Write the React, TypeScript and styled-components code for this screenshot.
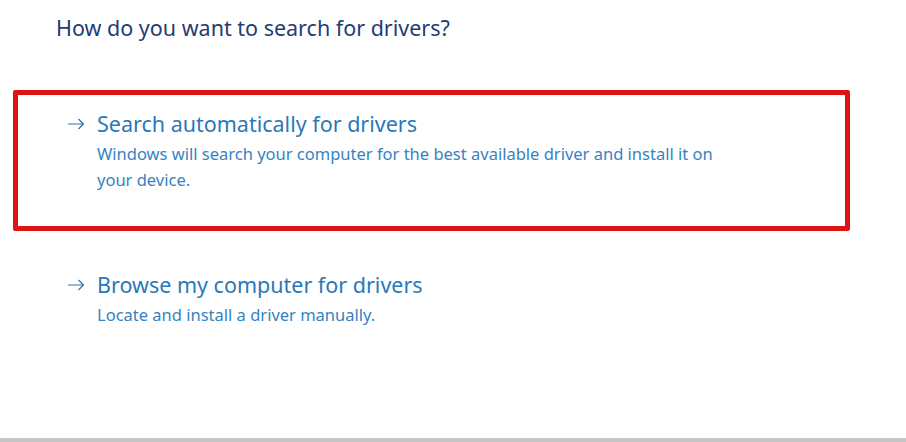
import styled, { createGlobalStyle } from "styled-components";

const GlobalStyle = createGlobalStyle`
    html, body {
        margin: 0;
        padding: 0;
        background: #ffffff;
    }
    body {
        font-family: "Noto Sans", "Open Sans", sans-serif;
    }
`;

type Choice = {
    title: string;
    desc: string;
    highlighted?: boolean;
};

const choices: Choice[] = [
    {
        title: "Search automatically for drivers",
        desc: "Windows will search your computer for the best available driver and install it on your device.",
        highlighted: true,
    },
    {
        title: "Browse my computer for drivers",
        desc: "Locate and install a driver manually.",
    },
];

function Arrow() {
    return (
        <ArrowIcon viewBox="0 0 18 12" width="18" height="12">
            <path d="M1 6 H16.5 M11.5 1 L16.5 6 L11.5 11" fill="none" stroke="currentColor" strokeWidth="1.2" />
        </ArrowIcon>
    );
}

function App() {
    return (
        <Wrapper>
            <GlobalStyle />
            <Heading>How do you want to search for drivers?</Heading>
            <List>
                {choices.map((c) => (
                    <Option key={c.title} $highlighted={c.highlighted}>
                        <TitleRow>
                            <Arrow />
                            <Title>{c.title}</Title>
                        </TitleRow>
                        <Desc>{c.desc}</Desc>
                    </Option>
                ))}
            </List>
            <Foot />
        </Wrapper>
    );
}

const Wrapper = styled.div`
    width: 906px;
    height: 442px;
    display: flex;
    flex-direction: column;
    overflow: hidden;
`;
const Heading = styled.h1`
    margin: 14px 0 0 56px;
    font-size: 21.5px;
    font-weight: 400;
    line-height: 28px;
    color: #1f3d72;
`;
const List = styled.div`
    display: flex;
    flex-direction: column;
    gap: 20px;
    margin: 48px 0 0 13px;
    width: 837px;
`;
const Option = styled.div<{ $highlighted?: boolean }>`
    box-sizing: border-box;
    height: ${(p) => (p.$highlighted ? "141px" : "100px")};
    border: 5px solid ${(p) => (p.$highlighted ? "#dc1414" : "transparent")};
    border-radius: 2px;
    padding: 15px 0 0 49px;
`;
const TitleRow = styled.div`
    display: flex;
    align-items: center;
    gap: 12px;
`;
const ArrowIcon = styled.svg`
    color: #2a72b0;
    flex-shrink: 0;
`;
const Title = styled.span`
    font-size: 21.5px;
    line-height: 28px;
    color: #2a78b8;
`;
const Desc = styled.p`
    margin: 3px 0 0 30px;
    max-width: 640px;
    font-size: 16.5px;
    line-height: 26px;
    color: #3583c2;
`;
const Foot = styled.div`
    margin-top: auto;
    height: 4px;
    background: #c6c6c6;
`;

export default App;
